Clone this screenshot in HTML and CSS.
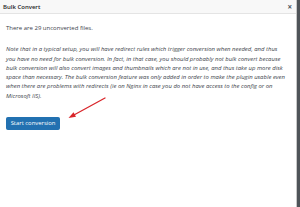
FILE: index.html
```html
<!DOCTYPE html>
<html>
<head>
<meta charset="utf-8">
<link rel="stylesheet" href="styles.css">
</head>
<body>
<div class="dialog">
  <div class="titlebar">
    <span class="title">Bulk Convert</span>
    <span class="close">×</span>
  </div>
  <div class="content">
    <p class="count">There are 29 unconverted files.</p>
    <p class="note">Note that in a typical setup, you will have redirect rules which trigger conversion when needed, and thus<br>you have no need for bulk conversion. In fact, in that case, you should probably not bulk convert because<br>bulk conversion will also convert images and thumbnails which are not in use, and thus take up more disk<br>space than necessary. The bulk conversion feature was only added in order to make the plugin usable even<br>when there are problems with redirects (ie on Nginx in case you do not have access to the config or on<br>Microsoft IIS).</p>
    <button class="start">Start conversion</button>
  </div>
  <svg class="arrow" width="300" height="207" viewBox="0 0 300 207">
    <line x1="105" y1="98" x2="73" y2="115.5" stroke="#d9252a" stroke-width="1.3" stroke-linecap="round"/>
    <polygon points="68.5,118 73.5,112.2 76,116.8" fill="#d9252a"/>
  </svg>
</div>
</body>
</html>
```
FILE: styles.css
```css
html, body {
  margin: 0;
  padding: 0;
}
body {
  width: 300px;
  height: 207px;
  background: #4f5459;
  overflow: hidden;
  font-family: "Open Sans", "Noto Sans", sans-serif;
}
.dialog {
  position: relative;
  width: 297px;
  height: 207px;
  background: #fff;
  border-right: 1px solid #c8c8c8;
  box-sizing: border-box;
}
.titlebar {
  height: 13px;
  background: #f8f8f8;
  border-bottom: 1px solid #e4e4e4;
  display: flex;
  align-items: center;
  justify-content: space-between;
  padding: 0 4px 0 3px;
}
.title {
  font-size: 6px;
  font-weight: 600;
  color: #1d2327;
}
.close {
  font-size: 8px;
  line-height: 8px;
  color: #50575e;
  font-weight: 700;
}
.content {
  padding: 0 5px 0 6px;
}
.count {
  margin: 10.3px 0 0;
  font-size: 6px;
  line-height: 9.3px;
  color: #3c434a;
}
.note {
  margin: 11.7px 0 0;
  font-size: 5.95px;
  line-height: 9.3px;
  font-style: italic;
  color: #3c434a;
  white-space: nowrap;
}
.start {
  display: block;
  margin-top: 15.5px;
  width: 54px;
  height: 13.3px;
  padding: 0;
  border: 1px solid #2271b1;
  border-radius: 1.5px;
  background: #2271b1;
  color: #fff;
  font-family: "Open Sans", "Noto Sans", sans-serif;
  font-size: 5.9px;
  line-height: 11px;
}
.arrow {
  position: absolute;
  left: 0;
  top: 0;
  pointer-events: none;
}
```
